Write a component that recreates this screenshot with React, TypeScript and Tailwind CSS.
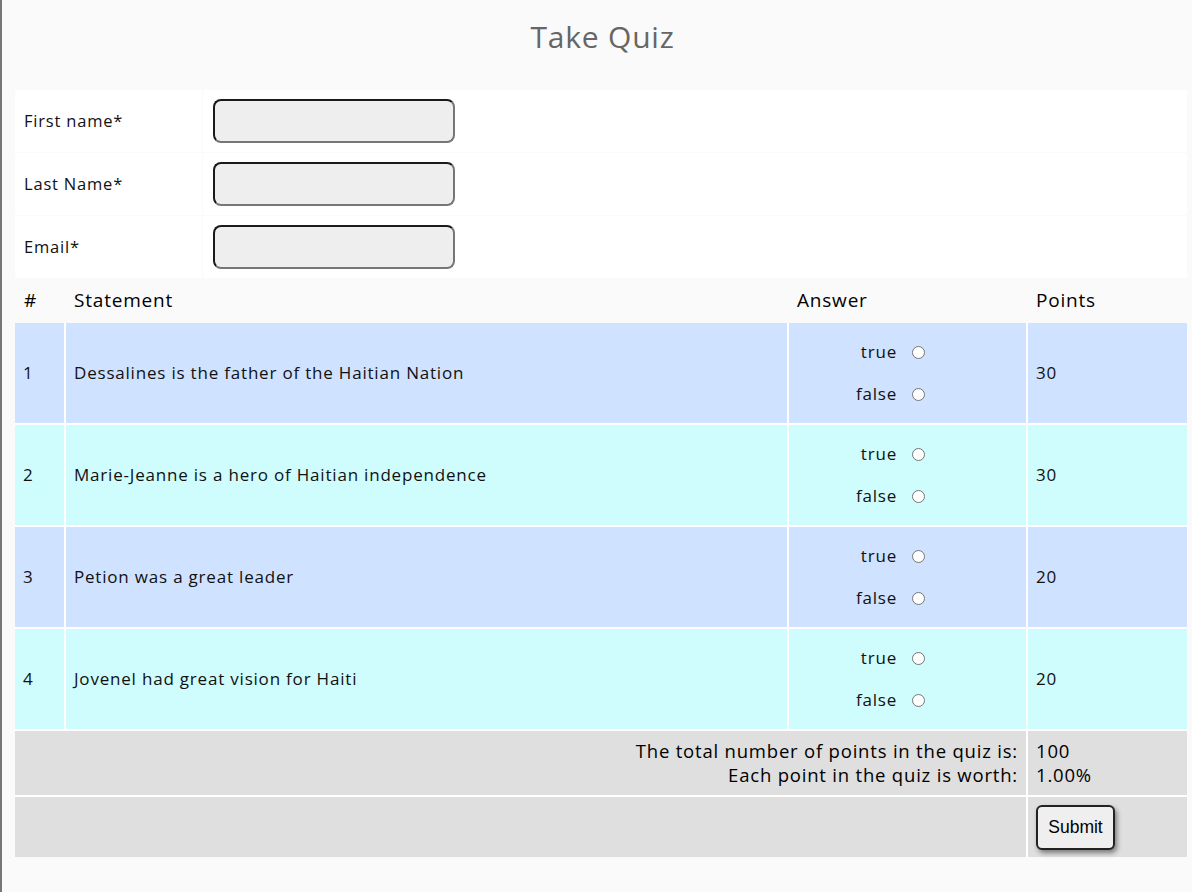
import React from "react";

const rows = [
  { n: 1, s: "Dessalines is the father of the Haitian Nation", p: 30, bg: "bg-[#cfe2ff]" },
  { n: 2, s: "Marie-Jeanne is a hero of Haitian independence", p: 30, bg: "bg-[#cffcfc]" },
  { n: 3, s: "Petion was a great leader", p: 20, bg: "bg-[#cfe2ff]" },
  { n: 4, s: "Jovenel had great vision for Haiti", p: 20, bg: "bg-[#cffcfc]" },
];

function Radio() {
  return <span className="inline-block w-[13px] h-[13px] rounded-full border border-[#767676] bg-white" />;
}

export default function App() {
  const font = { fontFamily: '"Open Sans", "Noto Sans", sans-serif' };
  return (
    <div className="min-h-[892px] bg-[#fafafa] border-l-2 border-[#777] text-[#111] tracking-[0.8px]" style={font}>
      <div className="pl-[13px] pr-[5px]">
        <div className="h-[90px] flex items-center justify-center">
          <h1 className="text-[30px] font-medium text-[#666] leading-none -mt-[16px] pl-[3px]">Take Quiz</h1>
        </div>

        <div className="flex flex-col gap-px">
          {["First name*", "Last Name*", "Email*"].map((l) => (
            <div key={l} className="flex gap-px h-[62px]">
              <div className="w-[187px] bg-white flex items-center pl-[9px] text-[16.5px]">{l}</div>
              <div className="flex-1 bg-white flex items-center pl-[10px]">
                <div className="w-[242px] h-[44px] rounded-[8px] bg-[#eeeeee] border-2 border-t-[#1a1a1a] border-l-[#1a1a1a] border-r-[#767676] border-b-[#767676]" />
              </div>
            </div>
          ))}
        </div>

        <div className="grid grid-cols-[49px_721px_237px_159px] gap-x-[2px] h-[45px] items-center text-[19px] font-medium text-black">
          <div className="pl-[9px]">#</div>
          <div className="pl-[8px]">Statement</div>
          <div className="pl-[8px]">Answer</div>
          <div className="pl-[8px]">Points</div>
        </div>

        <div className="grid grid-cols-[49px_721px_237px_159px] gap-[2px] bg-white text-[17px]">
          {rows.map((r) => (
            <React.Fragment key={r.n}>
              <div className={`${r.bg} h-[100px] flex items-center pl-[8px]`}>{r.n}</div>
              <div className={`${r.bg} flex items-center pl-[8px]`}>{r.s}</div>
              <div className={`${r.bg} flex items-center`}>
                <div className="w-[136px] flex flex-col items-end gap-[20px]">
                  <label className="flex items-center gap-[15px] h-[22px]">true <Radio /></label>
                  <label className="flex items-center gap-[15px] h-[22px]">false <Radio /></label>
                </div>
              </div>
              <div className={`${r.bg} flex items-center pl-[8px]`}>{r.p}</div>
            </React.Fragment>
          ))}
          <div className="col-span-3 bg-[#dfdfdf] h-[64px] flex flex-col justify-center items-end pr-[8px] text-[18.5px] font-medium leading-[24px] text-black">
            <div>The total number of points in the quiz is:</div>
            <div>Each point in the quiz is worth:</div>
          </div>
          <div className="bg-[#dfdfdf] flex flex-col justify-center pl-[8px] text-[18.5px] font-medium leading-[24px] text-black">
            <div>100</div>
            <div>1.00%</div>
          </div>
          <div className="col-span-3 bg-[#dfdfdf] h-[60px]" />
          <div className="bg-[#dfdfdf] flex items-center pl-[8px]">
            <button
              className="w-[79px] h-[45px] rounded-[6px] bg-[#efefef] border-2 border-[#222] shadow-[2px_3px_5px_rgba(0,0,0,0.45)] text-[17.5px] text-black tracking-normal"
              style={{ fontFamily: '"Liberation Sans", Arial, sans-serif' }}
            >
              Submit
            </button>
          </div>
        </div>
      </div>
    </div>
  );
}
